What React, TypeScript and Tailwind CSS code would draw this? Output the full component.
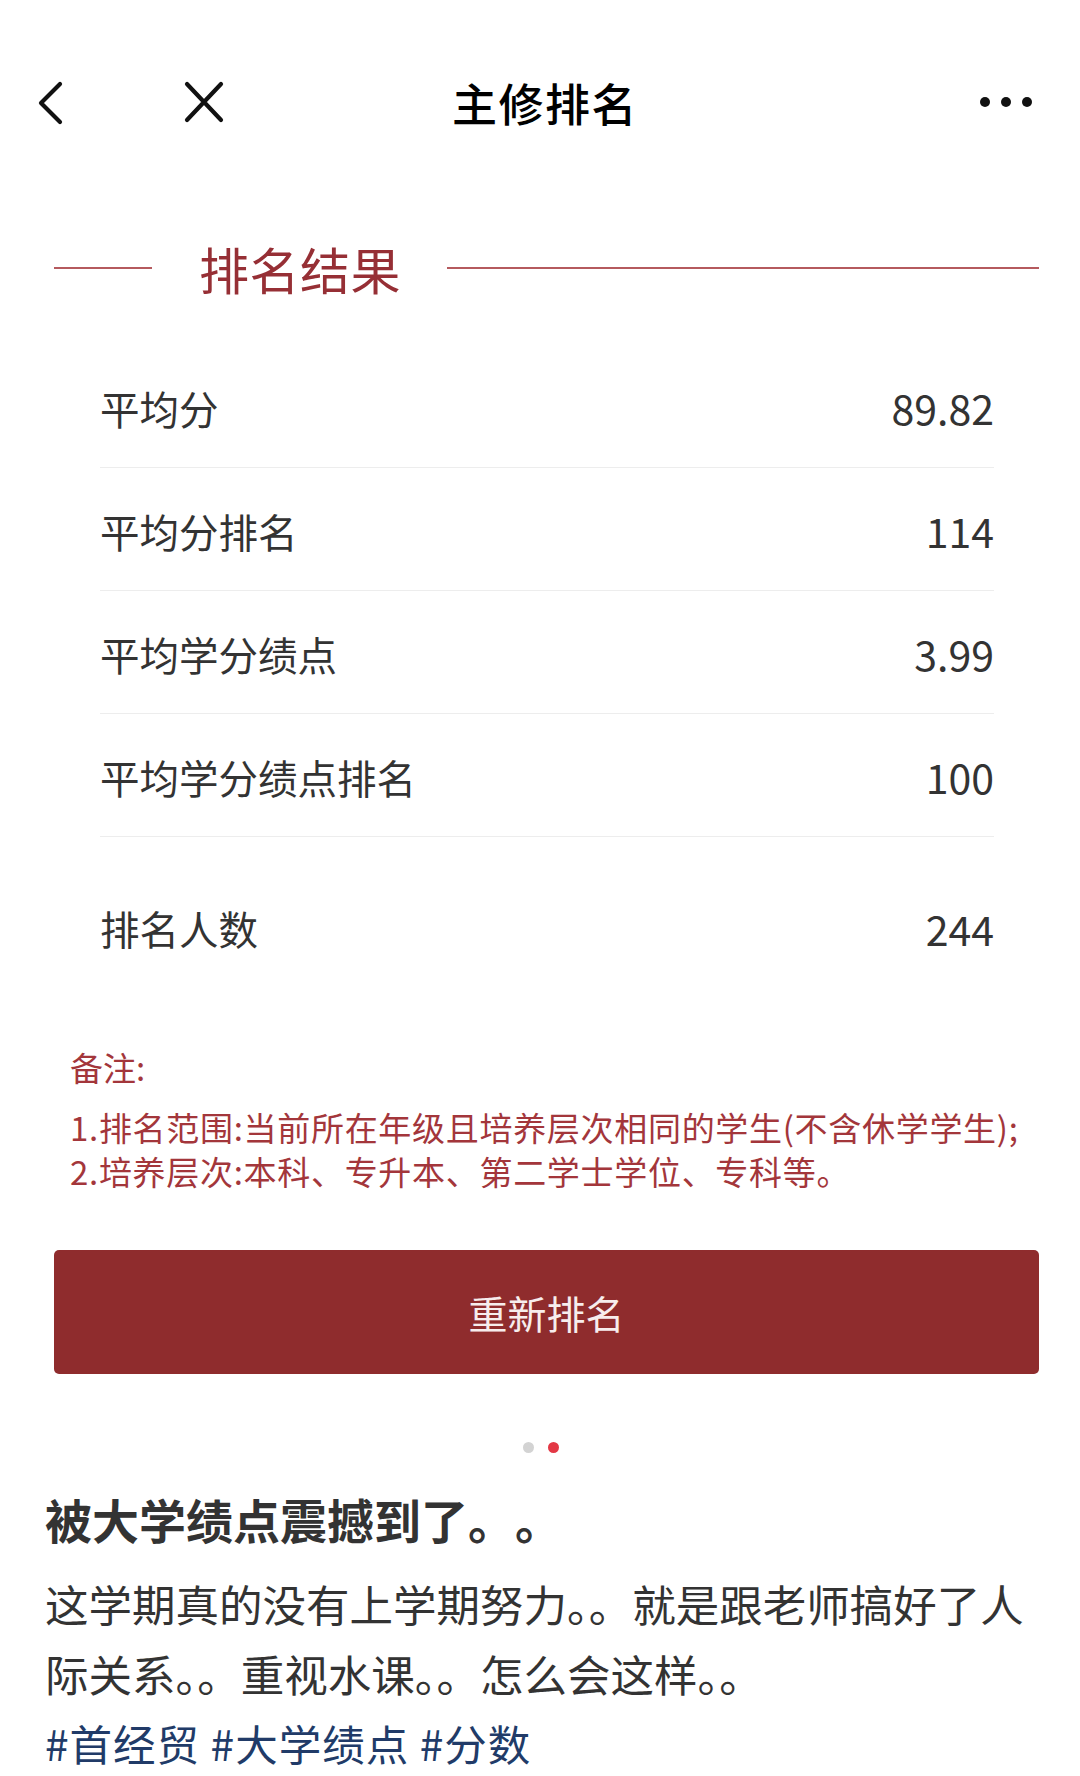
import React from "react";

const stats = [
  { label: "平均分", value: "89.82" },
  { label: "平均分排名", value: "114" },
  { label: "平均学分绩点", value: "3.99" },
  { label: "平均学分绩点排名", value: "100" },
];

const font = "font-['Noto_Sans_CJK_SC','Noto_Sans',sans-serif]";

function TopBar() {
  return (
    <div className="mt-[62px] h-[80px] flex items-center relative">
      {/* 返回 */}
      <svg className="absolute left-[34px] top-[18px]" width="32" height="46" viewBox="0 0 32 46" fill="none">
        <path d="M26 4 L7 23 L26 42" stroke="#111" strokeWidth="4.2" strokeLinecap="round" strokeLinejoin="round" />
      </svg>
      {/* 关闭 */}
      <svg className="absolute left-[182px] top-[19px]" width="44" height="42" viewBox="0 0 44 42" fill="none">
        <path d="M5 3 L39 39 M39 3 L5 39" stroke="#111" strokeWidth="4.2" strokeLinecap="round" />
      </svg>
      <div className="w-full pl-[10px] text-center text-[45px] leading-none font-medium text-black tracking-[1.5px]">
        主修排名
      </div>
      {/* 更多 */}
      <div className="absolute left-[980px] top-[35px] flex gap-[11px]">
        <span className="w-[10px] h-[10px] rounded-full bg-[#111]" />
        <span className="w-[10px] h-[10px] rounded-full bg-[#111]" />
        <span className="w-[10px] h-[10px] rounded-full bg-[#111]" />
      </div>
    </div>
  );
}

function SectionTitle() {
  return (
    <div className="mt-[96px] ml-[54px] mr-[41px] h-[60px] flex items-center">
      <div className="w-[98px] h-[2px] bg-[#b55a5e]" />
      <div className="ml-[47px] text-[50px] leading-none text-[#962f35] tracking-[0.5px]">排名结果</div>
      <div className="ml-[46px] flex-1 h-[2px] bg-[#b55a5e]" />
    </div>
  );
}

export default function App() {
  return (
    <div className={`w-[1080px] h-[1776px] bg-white overflow-hidden ${font}`}>
      <TopBar />
      <SectionTitle />

      {/* 排名数据 */}
      <div className="mt-[47px] ml-[100px] mr-[86px]">
        {stats.map((s) => (
          <div
            key={s.label}
            className="h-[123px] flex items-center justify-between border-b border-[#ededed] pt-[3px] text-[#333]"
          >
            <span className="text-[39.5px] leading-none">{s.label}</span>
            <span className="text-[41px] leading-none">{s.value}</span>
          </div>
        ))}
        <div className="h-[182px] flex items-center justify-between text-[#333]">
          <span className="text-[39.5px] leading-none">排名人数</span>
          <span className="text-[41px] leading-none">244</span>
        </div>
      </div>

      {/* 备注 */}
      <div className="mt-[26px] mx-[70px] text-[#a3363b] text-[33px]">
        <p className="leading-[44px]">备注:</p>
        <p className="mt-[16px] leading-[44px] whitespace-nowrap tracking-[0.7px]">
          1.排名范围:当前所在年级且培养层次相同的学生(不含休学学生);
        </p>
        <p className="leading-[44px] whitespace-nowrap tracking-[0.7px]">2.培养层次:本科、专升本、第二学士学位、专科等。</p>
      </div>

      <button className="mt-[57px] ml-[54px] w-[985px] h-[124px] rounded-[5px] bg-[#8f2c2d] text-[#f7eded] text-[39px] leading-none flex items-center justify-center">
        重新排名
      </button>

      {/* 分页点 */}
      <div className="mt-[68px] flex justify-center gap-[14px] pl-[2px]">
        <span className="w-[11px] h-[11px] rounded-full bg-[#d3d3d3]" />
        <span className="w-[11px] h-[11px] rounded-full bg-[#e33845]" />
      </div>

      {/* 笔记正文 */}
      <div className="mt-[36px] ml-[45px] w-[1000px]">
        <h1 className="text-[47px] leading-[60px] font-bold text-[#333] [text-spacing-trim:space-all]">
          被大学绩点震撼到了。。
        </h1>
        <p className="mt-[20px] text-[43.5px] leading-[70px] text-[#333]">
          这学期真的没有上学期努力。。就是跟老师搞好了人际关系。。重视水课。。怎么会这样。。
        </p>
        <p className="text-[42.5px] leading-[68px] text-[#213b68] tracking-[1px]">#首经贸 #大学绩点 #分数</p>
      </div>
    </div>
  );
}
